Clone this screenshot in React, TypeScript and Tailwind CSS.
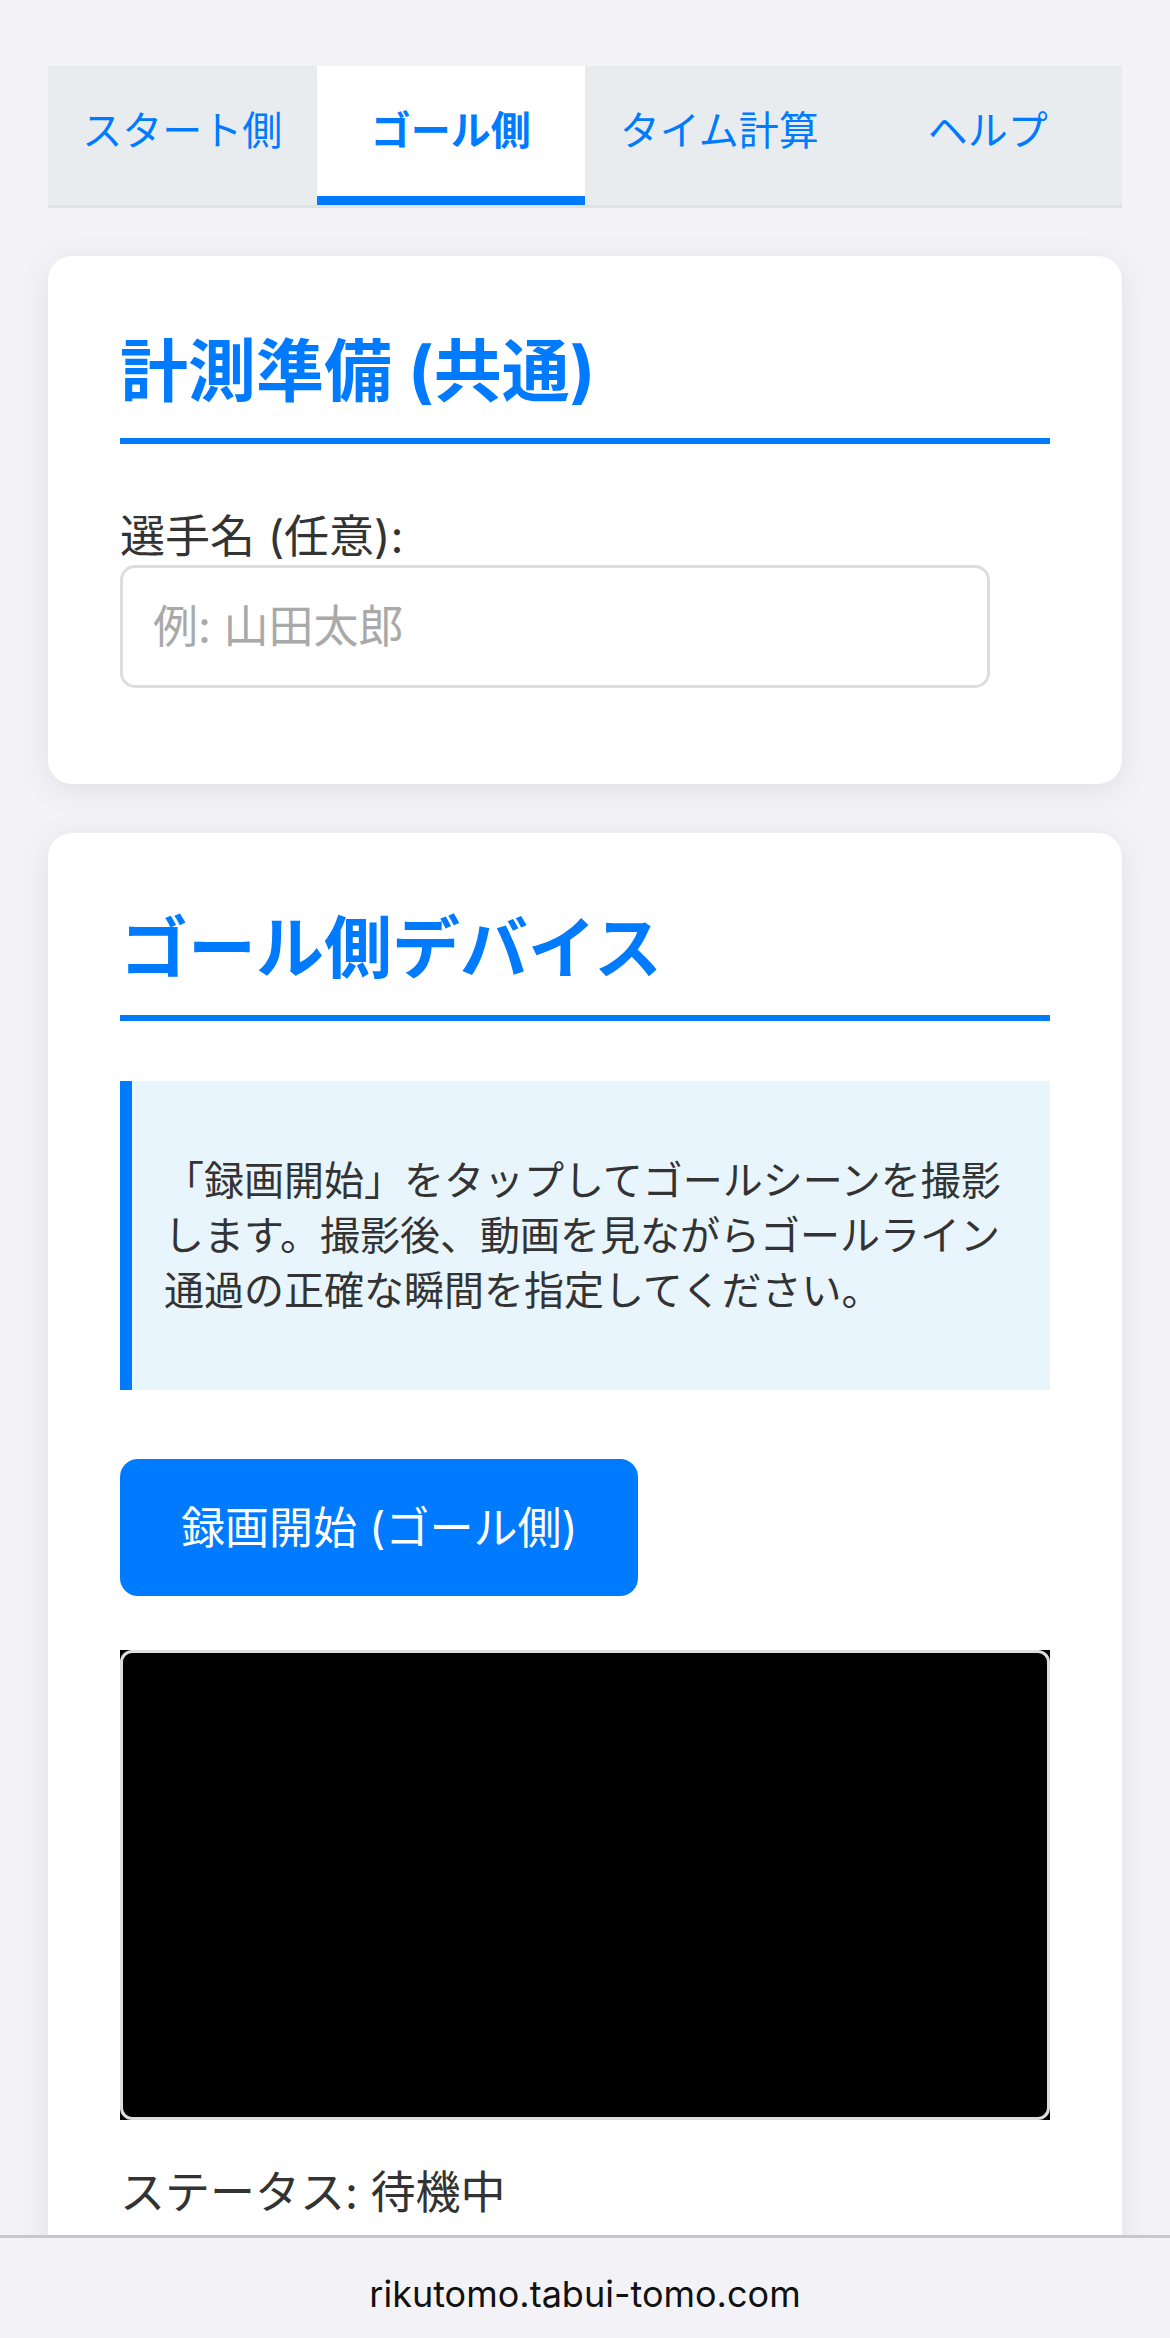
import * as React from 'react';

const tabs = ['スタート側', 'ゴール側', 'タイム計算', 'ヘルプ'] as const;

function Card({ title, children, className = '' }: { title: string; children: React.ReactNode; className?: string }) {
    return (
        <section className={['rounded-[24px] bg-white px-[72px] pt-[72px] shadow-[0_6px_30px_rgba(0,0,0,0.08)]', className].join(' ')}>
            <h2 className="border-b-[6px] border-[#007aff] pb-[24px] text-[68px] font-bold leading-[86px] text-[#007aff]">{title}</h2>
            {children}
        </section>
    );
}

export default function App() {
    const [active, setActive] = React.useState<(typeof tabs)[number]>('ゴール側');
    const [name, setName] = React.useState('');

    return (
        <div className="flex h-[2338px] w-[1170px] flex-col overflow-hidden bg-[#f2f2f7] font-['Inter','Noto_Sans_CJK_JP',sans-serif] text-[#333]">
            <main className="flex-1 overflow-hidden px-[48px] pt-[66px]">
                <nav className="flex border-b-[3px] border-[#dee2e6] bg-[#e9ecef]">
                    {tabs.map(t => (
                        <button
                            key={t}
                            onClick={() => setActive(t)}
                            className={[
                                'flex h-[139px] flex-1 items-center justify-center border-b-[9px] text-[40px] text-[#007aff]',
                                active === t ? 'border-[#007aff] bg-white font-bold' : 'border-transparent font-normal',
                            ].join(' ')}
                        >
                            {t}
                        </button>
                    ))}
                </nav>

                <Card title="計測準備 (共通)" className="mt-[48px] pb-[96px]">
                    <label htmlFor="runner" className="mt-[65px] block text-[45px] leading-[56px]">選手名 (任意):</label>
                    <input
                        id="runner"
                        value={name}
                        onChange={e => setName(e.target.value)}
                        placeholder="例: 山田太郎"
                        className="block h-[123px] w-[870px] rounded-[15px] border-[3px] border-[#ddd] bg-white px-[30px] text-[45px] outline-none placeholder:text-[#a9a9a9]"
                    />
                </Card>

                <Card title="ゴール側デバイス" className="mt-[49px] pb-[80px]">
                    <div className="mt-[60px] border-l-[12px] border-[#007aff] bg-[#e8f5fc] py-[72px] pl-[32px] pr-[30px]">
                        <p className="text-[40px] leading-[55px]">
                            「録画開始」をタップしてゴールシーンを撮影します。撮影後、動画を見ながらゴールライン通過の正確な瞬間を指定してください。
                        </p>
                    </div>

                    <button className="mt-[69px] flex h-[137px] items-center rounded-[18px] bg-[#007aff] px-[61px] text-[44px] text-white">
                        録画開始 (ゴール側)
                    </button>

                    <div className="mt-[54px] h-[470px] bg-black">
                        <div className="h-full rounded-[12px] border-[3px] border-[#ddd]" />
                    </div>

                    <p className="mt-[45px] text-[45px] leading-[56px]">ステータス: 待機中</p>
                </Card>
            </main>

            <footer className="flex h-[103px] shrink-0 justify-center border-t-[3px] border-[#c8c8cc] bg-[#f3f3f7] pt-[34px]">
                <span className="text-[36px] leading-[44px] text-[#111]">rikutomo.tabui-tomo.com</span>
            </footer>
        </div>
    );
}
